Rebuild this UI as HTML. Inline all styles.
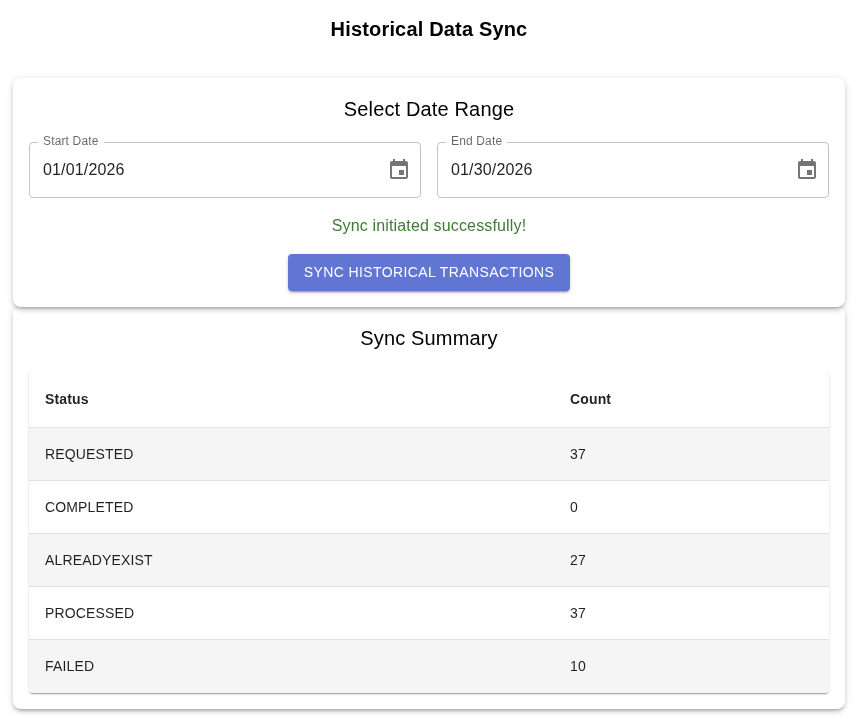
<!DOCTYPE html>
<html>
<head>
<meta charset="utf-8">
<style>
html,body{margin:0;padding:0;background:#fff;}
body{width:856px;height:719px;overflow:hidden;position:relative;font-family:"Liberation Sans",sans-serif;color:rgba(0,0,0,0.87);}
*{box-sizing:border-box;}
.title{position:absolute;left:1px;top:17px;width:856px;text-align:center;font-size:20px;font-weight:700;line-height:24px;color:#000;letter-spacing:0.17px;}
.card{position:absolute;left:13px;width:832px;background:#fff;border-radius:8px;box-shadow:0 3px 3px -2px rgba(0,0,0,0.2),0 3px 4px 0 rgba(0,0,0,0.14),0 1px 8px 0 rgba(0,0,0,0.12);}
#c1{top:78px;height:229px;z-index:2;}
#c2{top:306px;height:403px;z-index:1;}
.h6{position:absolute;left:0;width:832px;text-align:center;font-size:20px;line-height:32px;color:#000;letter-spacing:0.15px;}
.field{position:absolute;top:64px;width:392px;height:56px;border:1px solid rgba(0,0,0,0.23);border-radius:4px;}
.field .lbl{position:absolute;left:8px;top:-10px;padding:0 5px;background:#fff;font-size:12px;line-height:16px;color:rgba(0,0,0,0.6);letter-spacing:0.15px;}
.field .val{position:absolute;left:13px;top:15px;font-size:16px;line-height:24px;color:rgba(0,0,0,0.87);letter-spacing:0.15px;}
.field svg{position:absolute;right:9px;top:15px;width:24px;height:24px;fill:rgba(0,0,0,0.54);}
.msg{position:absolute;left:0;top:136px;width:832px;text-align:center;font-size:16px;line-height:24px;color:#3d7c33;letter-spacing:0.15px;}
.btn{position:absolute;left:275px;top:176px;width:282px;height:37px;border-radius:4px;background:#6076d2;color:#fff;font-size:14px;line-height:37px;text-align:center;letter-spacing:0.4px;box-shadow:0 3px 1px -2px rgba(0,0,0,0.2),0 2px 2px 0 rgba(0,0,0,0.14),0 1px 5px 0 rgba(0,0,0,0.12);}
.tbl{position:absolute;left:16px;top:65px;width:800px;height:322px;border-radius:4px;background:#fff;overflow:hidden;box-shadow:0 2px 1px -1px rgba(0,0,0,0.2),0 1px 1px 0 rgba(0,0,0,0.14),0 1px 3px 0 rgba(0,0,0,0.12);}
.row{position:relative;width:800px;height:53px;border-bottom:1px solid rgba(224,224,224,1);font-size:14px;line-height:20px;}
.row.hd{height:57px;font-weight:700;}
.row.alt{background:#f5f5f5;}
.row span{position:absolute;top:16px;letter-spacing:0.15px;}
.row.hd span{top:18px;}
.row .a{left:16px;}
.row .b{left:541px;}
</style>
</head>
<body>
<div id="wrap" style="position:absolute;left:0;top:0;width:856px;height:719px;will-change:transform;">
<div class="title">Historical Data Sync</div>
<div class="card" id="c1">
  <div class="h6" style="top:15px;">Select Date Range</div>
  <div class="field" style="left:16px;"><div class="lbl">Start Date</div><div class="val">01/01/2026</div>
    <svg viewBox="0 0 24 24"><path d="M17 12h-5v5h5v-5zM16 1v2H8V1H6v2H5c-1.11 0-1.99.9-1.99 2L3 19c0 1.1.89 2 2 2h14c1.1 0 2-.9 2-2V5c0-1.1-.9-2-2-2h-1V1h-2zm3 18H5V8h14v11z"/></svg></div>
  <div class="field" style="left:424px;"><div class="lbl">End Date</div><div class="val">01/30/2026</div>
    <svg viewBox="0 0 24 24"><path d="M17 12h-5v5h5v-5zM16 1v2H8V1H6v2H5c-1.11 0-1.99.9-1.99 2L3 19c0 1.1.89 2 2 2h14c1.1 0 2-.9 2-2V5c0-1.1-.9-2-2-2h-1V1h-2zm3 18H5V8h14v11z"/></svg></div>
  <div class="msg">Sync initiated successfully!</div>
  <div class="btn">SYNC HISTORICAL TRANSACTIONS</div>
</div>
<div class="card" id="c2">
  <div class="h6" style="top:16px;">Sync Summary</div>
  <div class="tbl">
    <div class="row hd"><span class="a">Status</span><span class="b">Count</span></div>
    <div class="row alt"><span class="a">REQUESTED</span><span class="b">37</span></div>
    <div class="row"><span class="a">COMPLETED</span><span class="b">0</span></div>
    <div class="row alt"><span class="a">ALREADYEXIST</span><span class="b">27</span></div>
    <div class="row"><span class="a">PROCESSED</span><span class="b">37</span></div>
    <div class="row alt" style="border-bottom:0;"><span class="a">FAILED</span><span class="b">10</span></div>
  </div>
</div>
</div>
</body>
</html>
